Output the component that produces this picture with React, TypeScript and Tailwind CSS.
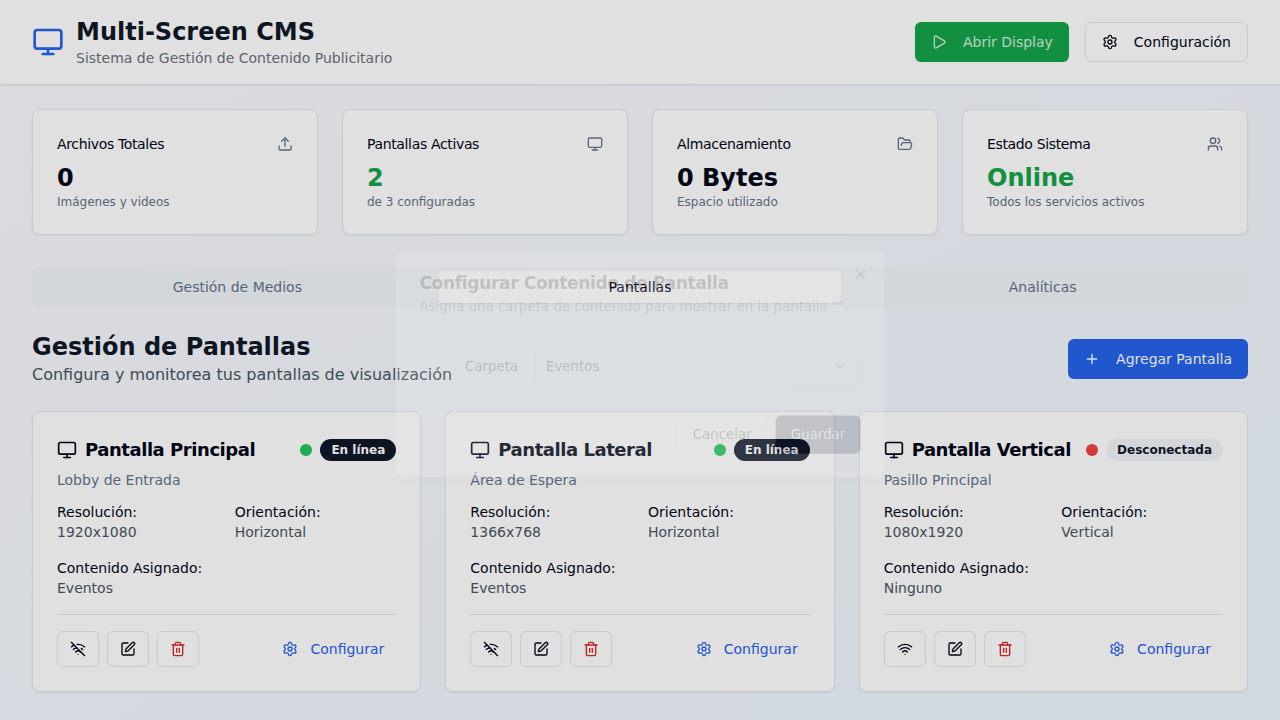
import { Monitor, Play, Settings, Upload, FolderOpen, Users, Plus, WifiOff, Wifi, SquarePen, Trash2, X, ChevronDown } from "lucide-react";

const stats = [
  { title: "Archivos Totales", value: "0", sub: "Imágenes y videos", Icon: Upload, color: "text-[#020617]" },
  { title: "Pantallas Activas", value: "2", sub: "de 3 configuradas", Icon: Monitor, color: "text-[#16a34a]" },
  { title: "Almacenamiento", value: "0 Bytes", sub: "Espacio utilizado", Icon: FolderOpen, color: "text-[#020617]" },
  { title: "Estado Sistema", value: "Online", sub: "Todos los servicios activos", Icon: Users, color: "text-[#16a34a]" },
];

const screens = [
  { name: "Pantalla Principal", place: "Lobby de Entrada", res: "1920x1080", ori: "Horizontal", content: "Eventos", online: true },
  { name: "Pantalla Lateral", place: "Área de Espera", res: "1366x768", ori: "Horizontal", content: "Eventos", online: true },
  { name: "Pantalla Vertical", place: "Pasillo Principal", res: "1080x1920", ori: "Vertical", content: "Ninguno", online: false },
];

function ScreenCard({ s }: { s: (typeof screens)[number] }) {
  return (
    <div className="bg-white border border-[#e2e8f0] rounded-lg shadow-[0_1px_2px_0_rgb(0_0_0/0.05)] p-6">
      <div className="flex items-center justify-between h-7">
        <div className="flex items-center gap-2 text-[#020617]">
          <Monitor className="w-5 h-5" />
          <span className="text-lg font-semibold leading-7 tracking-tight">{s.name}</span>
        </div>
        <div className="flex items-center gap-2">
          <span className={s.online ? "w-3 h-3 rounded-full bg-[#22c55e]" : "w-3 h-3 rounded-full bg-[#ef4444]"} />
          <span className={s.online ? "px-2.5 py-0.5 rounded-full border border-transparent text-xs font-semibold bg-[#0f172a] text-white" : "px-2.5 py-0.5 rounded-full border border-transparent text-xs font-semibold bg-[#f1f5f9] text-[#0f172a]"}>
            {s.online ? "En línea" : "Desconectada"}
          </span>
        </div>
      </div>
      <p className="mt-1.5 text-sm text-[#64748b]">{s.place}</p>
      <div className="mt-3 grid grid-cols-2 gap-4 text-sm">
        <div>
          <p className="text-[#020617]">Resolución:</p>
          <p className="text-[#4b5563]">{s.res}</p>
        </div>
        <div>
          <p className="text-[#020617]">Orientación:</p>
          <p className="text-[#4b5563]">{s.ori}</p>
        </div>
      </div>
      <div className="mt-4 text-sm">
        <p className="text-[#020617]">Contenido Asignado:</p>
        <p className="text-[#4b5563]">{s.content}</p>
      </div>
      <div className="mt-4 pt-4 border-t border-[#e2e8f0] flex items-center justify-between">
        <div className="flex items-center gap-2">
          <button className="h-9 px-3 rounded-md border border-[#e2e8f0] bg-white text-[#020617] flex items-center justify-center">
            {s.online ? <WifiOff className="w-4 h-4" /> : <Wifi className="w-4 h-4" />}
          </button>
          <button className="h-9 px-3 rounded-md border border-[#e2e8f0] bg-white text-[#020617] flex items-center justify-center">
            <SquarePen className="w-4 h-4" />
          </button>
          <button className="h-9 px-3 rounded-md border border-[#e2e8f0] bg-white text-[#dc2626] flex items-center justify-center">
            <Trash2 className="w-4 h-4" />
          </button>
        </div>
        <button className="h-9 px-3 rounded-md text-sm text-[#2563eb] flex items-center gap-3">
          <Settings className="w-4 h-4" />
          Configurar
        </button>
      </div>
    </div>
  );
}

export default function App() {
  return (
    <div className="min-h-screen bg-gradient-to-br from-[#f8fafc] to-[#eff6ff] font-['DejaVu_Sans',sans-serif] text-[#020617]">
      <header className="bg-white border-b border-[#e2e8f0] shadow-[0_1px_2px_0_rgb(0_0_0/0.05)] px-8 py-4 flex items-center justify-between">
        <div className="flex items-center gap-3">
          <Monitor className="w-8 h-8 text-[#2563eb]" />
          <div>
            <h1 className="text-2xl font-bold text-[#111827]">Multi-Screen CMS</h1>
            <p className="text-sm text-[#6b7280]">Sistema de Gestión de Contenido Publicitario</p>
          </div>
        </div>
        <div className="flex items-center gap-4">
          <button className="h-10 px-4 rounded-md bg-[#16a34a] text-white/80 text-sm flex items-center gap-4">
            <Play className="w-4 h-4" />
            Abrir Display
          </button>
          <button className="h-10 px-4 rounded-md border border-[#e2e8f0] bg-white text-sm text-[#020617] flex items-center gap-4">
            <Settings className="w-4 h-4" />
            Configuración
          </button>
        </div>
      </header>

      <main className="px-8 py-6">
        <div className="grid grid-cols-4 gap-6 mb-8">
          {stats.map((c) => (
            <div key={c.title} className="bg-white border border-[#e2e8f0] rounded-lg shadow-[0_1px_2px_0_rgb(0_0_0/0.05)] p-6">
              <div className="flex items-center justify-between pb-2">
                <span className="text-sm tracking-tight text-[#020617]">{c.title}</span>
                <c.Icon className="w-4 h-4 text-[#64748b]" />
              </div>
              <div className={"text-2xl font-bold " + c.color}>{c.value}</div>
              <p className="text-xs text-[#64748b]">{c.sub}</p>
            </div>
          ))}
        </div>

        <div className="grid grid-cols-3 h-10 p-1 rounded-md bg-[#f1f5f9] text-sm text-[#64748b]">
          <div className="flex items-center justify-center">Gestión de Medios</div>
          <div className="flex items-center justify-center rounded-sm bg-white shadow-[0_1px_2px_0_rgb(0_0_0/0.05)] text-[#020617]">Pantallas</div>
          <div className="flex items-center justify-center">Analíticas</div>
        </div>

        <div className="mt-6 flex items-center justify-between">
          <div>
            <h2 className="text-2xl font-bold text-[#111827]">Gestión de Pantallas</h2>
            <p className="text-base text-[#4b5563]">Configura y monitorea tus pantallas de visualización</p>
          </div>
          <button className="h-10 px-4 rounded-md bg-[#2563eb] text-white text-sm flex items-center gap-4">
            <Plus className="w-4 h-4" />
            Agregar Pantalla
          </button>
        </div>

        <div className="mt-6 grid grid-cols-3 gap-6">
          {screens.map((s) => (
            <ScreenCard key={s.name} s={s} />
          ))}
        </div>
      </main>

      <div className="fixed inset-0 bg-black/[0.12]" />

      <div className="fixed left-[384px] top-[245px] w-[512px] scale-[0.955] opacity-[0.14] bg-white border border-[#e2e8f0] rounded-lg shadow-lg p-6 text-[#020617]">
        <X className="absolute right-4 top-4 w-4 h-4 opacity-70" />
        <h3 className="text-lg font-semibold leading-none tracking-tight">Configurar Contenido de Pantalla</h3>
        <p className="mt-1.5 text-sm text-[#64748b]">Asigna una carpeta de contenido para mostrar en la pantalla "".</p>
        <div className="mt-4 py-4">
          <div className="grid grid-cols-4 items-center gap-4">
            <label className="text-sm text-right">Carpeta</label>
            <div className="col-span-3 h-10 px-3 rounded-md border border-[#e2e8f0] bg-white text-sm flex items-center justify-between">
              Eventos
              <ChevronDown className="w-4 h-4 opacity-50" />
            </div>
          </div>
        </div>
        <div className="mt-4 flex justify-end gap-2">
          <button className="h-10 px-4 rounded-md border border-[#e2e8f0] bg-white text-sm">Cancelar</button>
          <button className="h-10 px-4 rounded-md bg-[#0f172a] text-white text-sm">Guardar</button>
        </div>
      </div>
    </div>
  );
}
